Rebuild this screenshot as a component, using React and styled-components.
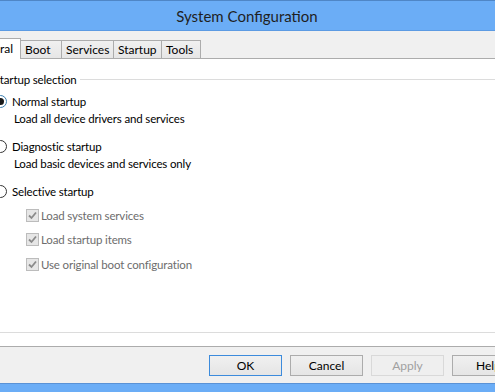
import styled, { createGlobalStyle } from "styled-components";

const Global = createGlobalStyle`
  html, body {
    margin: 0;
    padding: 0;
    overflow: hidden;
    background: #f0f0f0;
  }
  body {
    font-family: Lato, "Noto Sans", sans-serif;
    font-size: 11.5px;
    letter-spacing: -0.15px;
    color: #000;
  }
`;

const Window = styled.div`
  margin-left: -52px;
  width: 598px;
  height: 392px;
  background: #6badf6;
  border-top: 1px solid #4f86c6;
  box-sizing: border-box;
  display: flex;
  flex-direction: column;
`;

const TitleBar = styled.div`
  height: 29px;
  border-bottom: 1px solid #5c9be3;
  display: flex;
  align-items: center;
  justify-content: center;
  font-size: 15px;
  letter-spacing: 0;
  color: #1f1f1f;
`;

const Client = styled.div`
  margin: 0 8px;
  height: 353px;
  background: #f0f0f0;
  border-bottom: 1px solid #5a92d6;
  padding-top: 7px;
  box-sizing: border-box;
  display: flex;
  flex-direction: column;
`;

const TabRow = styled.div`
  display: flex;
  align-items: flex-end;
  height: 20px;
  margin-left: 7px;
  position: relative;
  z-index: 1;
`;

const Tab = styled.div`
  width: ${(p) => p.$w}px;
  height: ${(p) => (p.$active ? 21 : 18)}px;
  margin-left: -1px;
  margin-bottom: ${(p) => (p.$active ? -1 : 0)}px;
  box-sizing: border-box;
  border: 1px solid #acacac;
  border-bottom: none;
  background: ${(p) => (p.$active ? "#fff" : "linear-gradient(#f0f0f0, #e6e6e6)")};
  display: flex;
  align-items: center;
  justify-content: ${(p) => (p.$active ? "flex-end" : "flex-start")};
  padding: ${(p) => (p.$active ? "0 7px 1px 0" : "0 0 0 4px")};
  font-size: 12px;
  letter-spacing: 0;
  white-space: nowrap;
  &:first-child {
    margin-left: 0;
  }
`;

const Panel = styled.div`
  margin: 0 7px;
  height: 289px;
  box-sizing: border-box;
  background: #fff;
  border: 1px solid #acacac;
  padding: 12px 21px 0;
`;

const Group = styled.fieldset`
  margin: 0;
  height: 262px;
  box-sizing: border-box;
  border: 1px solid #dcdcdc;
  padding: 5px 0 0 8px;
  min-width: 0;
`;

const Legend = styled.legend`
  margin-left: -3px;
  padding: 1px 3px 0;
  line-height: 15px;
  height: 16px;
  box-sizing: border-box;
`;

const Row = styled.div`
  display: flex;
  align-items: center;
  height: 18px;
  gap: ${(p) => p.$gap || 5}px;
  margin-left: ${(p) => p.$indent || 0}px;
  margin-top: ${(p) => p.$top || 0}px;
  color: ${(p) => (p.$disabled ? "#6d6d6d" : "#000")};
`;

const Desc = styled.div`
  height: 18px;
  line-height: 18px;
  padding-left: 20px;
  margin-bottom: 9px;
`;

const Radio = styled.span`
  width: 13px;
  height: 13px;
  box-sizing: border-box;
  border-radius: 50%;
  border: 1px solid ${(p) => (p.$checked ? "#3c7fb1" : "#333")};
  background: #fff;
  display: flex;
  align-items: center;
  justify-content: center;
  flex-shrink: 0;
  &::after {
    content: "";
    display: ${(p) => (p.$checked ? "block" : "none")};
    width: 7px;
    height: 7px;
    border-radius: 50%;
    background: #1a1a1a;
  }
`;

const Check = styled.span`
  width: 13px;
  height: 13px;
  box-sizing: border-box;
  border: 1px solid #bcbcbc;
  background: #e6e6e6;
  display: flex;
  align-items: center;
  justify-content: center;
  flex-shrink: 0;
`;

const Footer = styled.div`
  flex: 1;
  display: flex;
  justify-content: flex-end;
  align-items: flex-start;
  gap: 8px;
  padding: 8px 13px 0 0;
`;

const Button = styled.button`
  width: 73px;
  height: 21px;
  box-sizing: border-box;
  font: inherit;
  font-size: 12px;
  padding: 0;
  border: 1px solid ${(p) => (p.$default ? "#3c8bdc" : p.disabled ? "#d9d9d9" : "#acacac")};
  background: ${(p) => (p.disabled ? "#efefef" : "linear-gradient(#f0f0f0, #e5e5e5)")};
  color: ${(p) => (p.disabled ? "#a0a0a0" : "#000")};
`;

const Tick = () => (
  <svg width="11" height="11" viewBox="0 0 11 11">
    <path d="M2 5.5 L4.5 8 L9 2.5" fill="none" stroke="#8a8a8a" strokeWidth="1.8" />
  </svg>
);

const checks = [
  "Load system services",
  "Load startup items",
  "Use original boot configuration",
];

export default function App() {
  return (
    <>
      <Global />
      <Window>
        <TitleBar>System Configuration</TitleBar>
        <Client>
          <TabRow>
            <Tab $w={58} $active>General</Tab>
            <Tab $w={42}>Boot</Tab>
            <Tab $w={53}>Services</Tab>
            <Tab $w={49}>Startup</Tab>
            <Tab $w={40}>Tools</Tab>
          </TabRow>
          <Panel>
            <Group>
              <Legend>Startup selection</Legend>
              <Row>
                <Radio $checked />
                Normal startup
              </Row>
              <Desc>Load all device drivers and services</Desc>
              <Row>
                <Radio />
                Diagnostic startup
              </Row>
              <Desc>Load basic devices and services only</Desc>
              <Row>
                <Radio />
                Selective startup
              </Row>
              {checks.map((c, i) => (
                <Row key={c} $indent={32} $gap={2} $top={i === 0 ? 6 : 6.5} $disabled>
                  <Check>
                    <Tick />
                  </Check>
                  {c}
                </Row>
              ))}
            </Group>
          </Panel>
          <Footer>
            <Button $default>OK</Button>
            <Button>Cancel</Button>
            <Button disabled>Apply</Button>
            <Button>Help</Button>
          </Footer>
        </Client>
      </Window>
    </>
  );
}
